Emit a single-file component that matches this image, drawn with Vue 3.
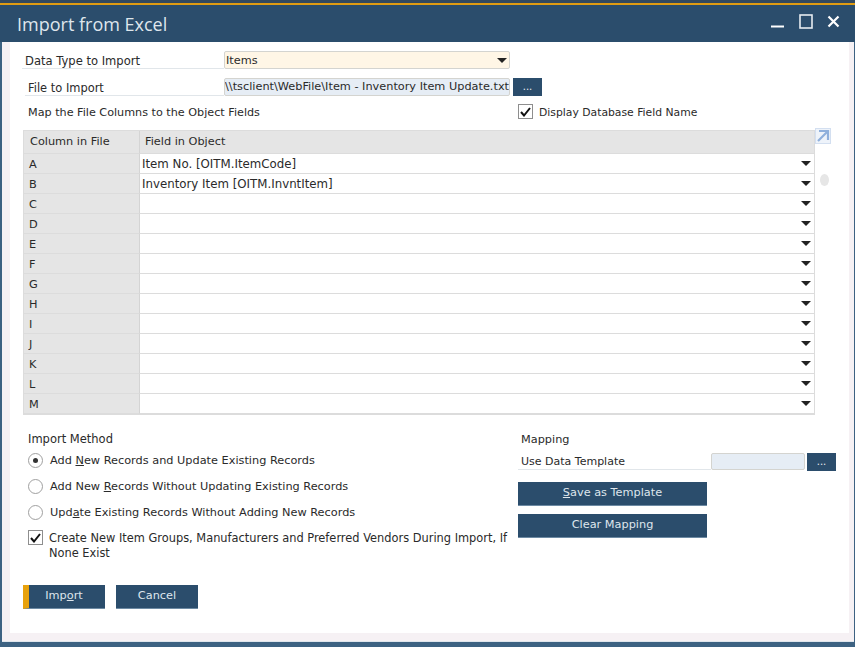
<script setup>
const rows = [
  { key: 'A', value: 'Item No. [OITM.ItemCode]' },
  { key: 'B', value: 'Inventory Item [OITM.InvntItem]' },
  ...'CDEFGHIJKLM'.split('').map((key) => ({ key, value: '' })),
]
</script>

<template>
  <div class="window">
    <div class="strip"></div>
    <header class="titlebar">
      <span class="title">Import from Excel</span>
      <div class="controls">
        <svg width="14" height="14" viewBox="0 0 14 14"><path d="M0 12.5h13" stroke="#fff" stroke-width="2" /></svg>
        <svg width="14" height="15" viewBox="0 0 14 15"><rect x="1" y="1" width="12" height="13" fill="none" stroke="#e6ebf0" stroke-width="1.6" /></svg>
        <svg width="13" height="13" viewBox="0 0 13 13"><path d="M1.5 1.5l10 10M11.5 1.5l-10 10" stroke="#fff" stroke-width="2.2" /></svg>
      </div>
    </header>
    <main class="frame">
      <div class="panel">
        <div class="field-row">
          <span class="label wide">Data Type to Import</span>
          <div class="select"><span>Items</span><i class="caret"></i></div>
        </div>
        <div class="field-row second">
          <span class="label narrow">File to Import</span>
          <div class="file-input"><span>\\tsclient\WebFile\Item - Inventory Item Update.txt</span></div>
          <button class="dots">...</button>
        </div>
        <div class="map-row">
          <span class="map-text">Map the File Columns to the Object Fields</span>
          <label class="check display-check">
            <span class="box"><svg width="11" height="10" viewBox="0 0 11 10"><path d="M1 5l3 3.5L10 1" fill="none" stroke="#111" stroke-width="2" /></svg></span>
            <span>Display Database Field Name</span>
          </label>
        </div>

        <div class="table-wrap">
          <div class="table">
            <div class="cell head key">Column in File</div>
            <div class="cell head val">Field in Object</div>
            <template v-for="row in rows" :key="row.key">
              <div class="cell key">{{ row.key }}</div>
              <div class="cell val"><span class="value">{{ row.value }}</span><i class="caret"></i></div>
            </template>
          </div>
          <div class="side">
            <div class="expand">
              <svg width="16" height="16" viewBox="0 0 16 16"><rect x="0.5" y="0.5" width="15" height="15" fill="#eef3fa" stroke="#d3dff0" /><path d="M4 3h9v9M12.5 3.5L3 13" fill="none" stroke="#8fb0dc" stroke-width="2.2" /></svg>
            </div>
            <div class="dot"></div>
          </div>
        </div>

        <div class="lower">
          <section class="method">
            <div class="section-title">Import Method</div>
            <label class="radio"><span class="ring on"></span><span>Add <u>N</u>ew Records and Update Existing Records</span></label>
            <label class="radio"><span class="ring"></span><span>Add New <u>R</u>ecords Without Updating Existing Records</span></label>
            <label class="radio"><span class="ring"></span><span>Upd<u>a</u>te Existing Records Without Adding New Records</span></label>
            <label class="check create-check">
              <span class="box"><svg width="11" height="10" viewBox="0 0 11 10"><path d="M1 5l3 3.5L10 1" fill="none" stroke="#111" stroke-width="2" /></svg></span>
              <span class="create-text">Create New Item Groups, Manufacturers and Preferred Vendors During Import, If<br />None Exist</span>
            </label>
          </section>
          <section class="mapping">
            <div class="section-title">Mapping</div>
            <div class="template-row">
              <span class="template-label">Use Data Template</span>
              <div class="template-input"></div>
              <button class="dots">...</button>
            </div>
            <button class="btn wide-btn save"><u>S</u>ave as Template</button>
            <button class="btn wide-btn clear">Clear Mapping</button>
          </section>
        </div>

        <div class="actions">
          <button class="btn action primary">Imp<u>o</u>rt</button>
          <button class="btn action">Cancel</button>
        </div>
      </div>
    </main>
  </div>
</template>

<style>
html, body { margin: 0; background: #2b4d6c; }
</style>

<style scoped>
.window {
  width: 855px;
  height: 647px;
  box-sizing: border-box;
  display: flex;
  flex-direction: column;
  background: #3d6282;
  padding: 0 1px 5px 2px;
  overflow: hidden;
  font-family: "DejaVu Sans", sans-serif;
  font-size: 11.3px;
  color: #2a2a2a;
}
.strip {
  height: 3px;
  margin: 0 -1px 0 -2px;
  background: #33495e;
  border-bottom: 2px solid #e09c12;
  flex: none;
}
.titlebar {
  height: 37px;
  margin: 0 -1px 0 -2px;
  flex: none;
  background: #2b4d6c;
  display: flex;
  align-items: center;
  justify-content: space-between;
  padding: 0 15px 0 17px;
}
.title {
  color: #dfe6ec;
  font-family: "Open Sans", sans-serif;
  font-size: 18px;
}
.controls { display: flex; gap: 14px; align-items: center; padding-bottom: 5px; }
.frame {
  flex: 1;
  min-height: 0;
  box-sizing: border-box;
  background: #f6f1f4;
  padding: 0 5px 8px 8px;
  border-bottom: 1px solid #dfe6ec;
}
.panel {
  height: 100%;
  box-sizing: border-box;
  background: #fff;
  padding: 9px 0 0 13px;
  position: relative;
}
.field-row { display: flex; align-items: stretch; height: 18px; }
.second { margin-top: 9px; }
.label {
  border-bottom: 1px solid #e1e6ea;
  box-sizing: border-box;
  line-height: 20px;
}
.wide { width: 202px; margin-left: -1px; padding-left: 3px; font-size: 11.55px; }
.narrow { width: 199px; margin-left: 2px; padding-left: 3px; font-size: 11.45px; }
.select, .file-input, .template-input {
  box-sizing: border-box;
  border: 1px solid #d4d4d0;
  border-radius: 2px;
}
.select {
  width: 286px;
  background: #fff6e6;
  display: flex;
  align-items: center;
  justify-content: space-between;
  padding: 0 2px 0 1px;
}
.file-input {
  width: 286px;
  background: #e6edf5;
  line-height: 16px;
  white-space: nowrap;
  overflow: hidden;
  display: flex;
  justify-content: flex-end;
}
.file-input span { flex: none; }
.dots {
  width: 29px;
  height: 18px;
  margin-left: 3px;
  padding: 0;
  border: 0;
  background: #2b4d6c;
  color: #e8edf2;
  font: inherit;
  font-size: 10px;
  line-height: 16px;
}
.caret {
  width: 0;
  height: 0;
  flex: none;
  border-left: 5px solid transparent;
  border-right: 5px solid transparent;
  border-top: 5px solid #222;
}
.map-row {
  display: flex;
  height: 17px;
  margin-top: 8px;
  padding-left: 5px;
  line-height: 17px;
}
.map-text { width: 490px; flex: none; font-size: 11.2px; }
.check { display: flex; align-items: flex-start; }
.box {
  box-sizing: border-box;
  width: 15px;
  height: 15px;
  border: 1px solid #8e8e8e;
  background: #fff;
  display: flex;
  align-items: center;
  justify-content: center;
  flex: none;
}
.display-check { gap: 6px; line-height: 17px; font-size: 10.8px; }
.table-wrap { display: flex; margin-top: 9px; }
.table {
  box-sizing: border-box;
  width: 792px;
  height: 285px;
  display: grid;
  grid-template-columns: 116px 1fr;
  grid-template-rows: 23px repeat(13, 20px);
  background: #fff;
  border: 1px solid #dcdcdc;
}
.cell {
  box-sizing: border-box;
  border-bottom: 1px solid #dcdcdc;
  line-height: 21px;
  white-space: nowrap;
}
.cell.key {
  background: #e5e5e5;
  border-right: 1px solid #d4d4d4;
  padding-left: 5px;
}
.cell.val {
  display: flex;
  align-items: center;
  justify-content: space-between;
  padding: 0 3px 0 2px;
}
.value { font-size: 11.8px; padding-top: 1px; line-height: 19px; }
.cell.head { background: #e5e5e5; line-height: 22px; }
.cell.head.key { padding-left: 6px; }
.cell.head.val { padding-left: 5px; justify-content: flex-start; }
.side { width: 20px; }
.expand { margin-top: -2px; height: 16px; }
.dot {
  width: 9px;
  height: 12px;
  margin: 30px 0 0 5px;
  border-radius: 50%;
  background: #e6e6e6;
}
.lower { display: flex; margin-top: 17px; }
.method { width: 495px; padding-left: 5px; box-sizing: border-box; flex: none; }
.section-title { line-height: 15px; height: 15px; }
.method .section-title { font-size: 11.5px; }
.radio { display: flex; align-items: center; height: 16px; margin-top: 10px; gap: 7px; }
.method .section-title + .radio { margin-top: 5px; }
.ring {
  box-sizing: border-box;
  width: 15px;
  height: 15px;
  border: 1px solid #a0a0a0;
  border-radius: 50%;
  position: relative;
  flex: none;
}
.ring.on::after {
  content: "";
  position: absolute;
  left: 4px;
  top: 4px;
  width: 5px;
  height: 5px;
  border-radius: 50%;
  background: #333;
}
.create-check { gap: 6px; margin-top: 10px; line-height: 15px; }
.create-text { white-space: nowrap; margin-top: 1px; font-size: 11.4px; }
.mapping { flex: none; width: 320px; }
.mapping .section-title { padding-left: 3px; }
.template-row { display: flex; margin-top: 6px; height: 17px; }
.template-label {
  width: 193px;
  box-sizing: border-box;
  padding-left: 3px;
  border-bottom: 1px solid #e1e6ea;
  line-height: 18px;
  font-size: 11px;
}
.template-input { width: 94px; background: #e6edf5; }
.mapping .dots { margin-left: 2px; }
.btn {
  box-sizing: border-box;
  display: block;
  border: 0 solid #6d8aa3;
  border-bottom-width: 1px;
  padding: 0 0 2px;
  background: #2b4d6c;
  color: #dfe6ec;
  font: inherit;
}
.wide-btn { width: 189px; height: 24px; }
.save { margin-top: 12px; }
.clear { margin-top: 8px; }
.actions { position: absolute; left: 13px; top: 543px; display: flex; gap: 11px; }
.action { width: 82px; height: 24px; }
.primary { border-left: 6px solid #e8a20c; padding-right: 6px; }
</style>
